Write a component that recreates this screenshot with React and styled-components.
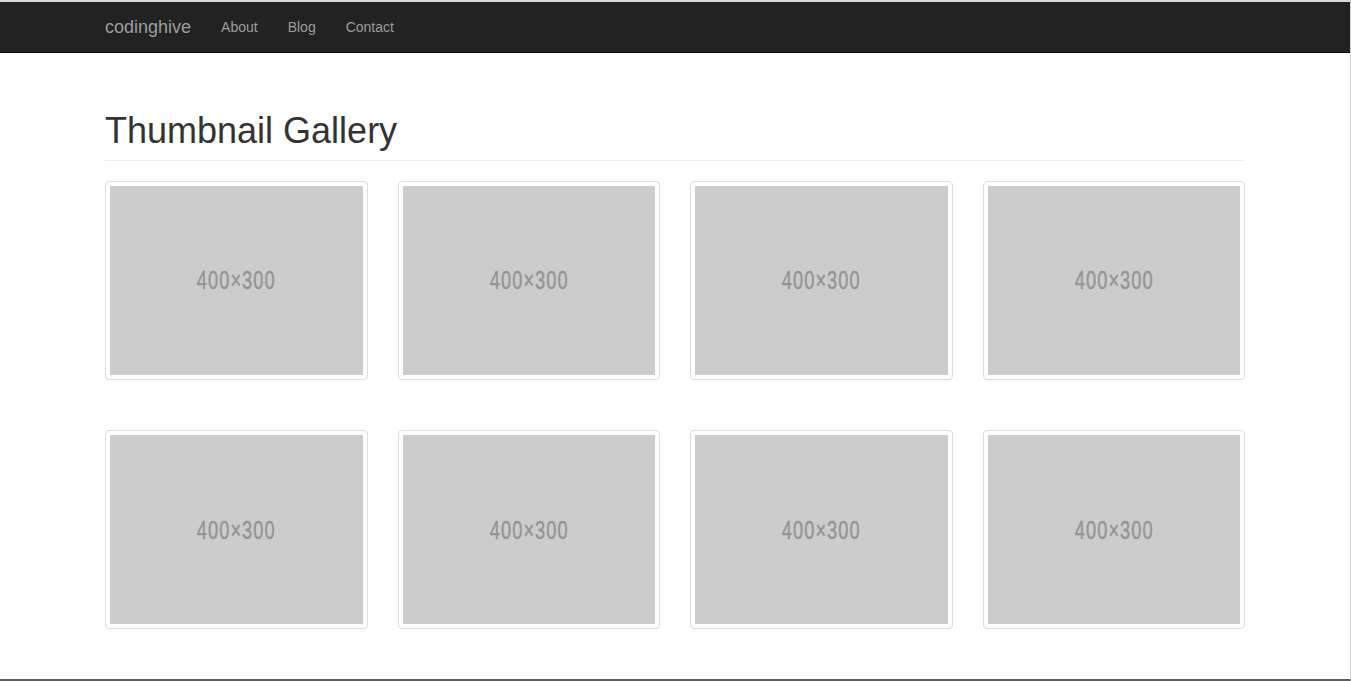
import React from "react";
import styled, { createGlobalStyle } from "styled-components";

const GlobalStyle = createGlobalStyle`
  html, body {
    margin: 0;
    padding: 0;
    background: #fff;
  }
  body {
    font-family: "Liberation Sans", Arial, Helvetica, sans-serif;
    font-size: 14px;
    line-height: 1.42857;
    color: #333;
  }
  * {
    box-sizing: border-box;
  }
  a {
    text-decoration: none;
  }
`;

const links = ["About", "Blog", "Contact"];
const thumbs = Array.from({ length: 8 }, (_, i) => i);

function App() {
  return (
    <Frame>
      <GlobalStyle />
      <Navbar>
        <NavInner>
          <Brand href="#">codinghive</Brand>
          <NavList>
            {links.map((l) => (
              <li key={l}>
                <NavLink href="#">{l}</NavLink>
              </li>
            ))}
          </NavList>
        </NavInner>
      </Navbar>

      <Container>
        <PageHeader>Thumbnail Gallery</PageHeader>
        <Gallery>
          {thumbs.map((i) => (
            <Thumbnail href="#" key={i}>
              <Placeholder>
                <PlaceholderText>400×300</PlaceholderText>
              </Placeholder>
            </Thumbnail>
          ))}
        </Gallery>
      </Container>
    </Frame>
  );
}

export default App;

const Frame = styled.div`
  height: 681px;
  overflow: hidden;
  border-top: 2px solid #d6d6d6;
  border-right: 1px solid #d2d2d2;
  border-bottom: 2px solid #5c6152;
  display: flex;
  flex-direction: column;
`;

const Navbar = styled.nav`
  background-color: #222;
  border-bottom: 1px solid #080808;
  min-height: 50px;
  flex-shrink: 0;
`;

const NavInner = styled.div`
  width: 1170px;
  margin: 0 auto;
  display: flex;
  align-items: center;
  height: 50px;
`;

const Brand = styled.a`
  font-size: 18px;
  line-height: 20px;
  padding: 15px;
  color: #9d9d9d;
`;

const NavList = styled.ul`
  display: flex;
  list-style: none;
  margin: 0;
  padding: 0;
`;

const NavLink = styled.a`
  display: block;
  padding: 15px;
  line-height: 20px;
  font-size: 14px;
  color: #9d9d9d;
`;

const Container = styled.div`
  width: 1170px;
  margin: 0 auto;
  padding: 58px 15px 0;
`;

const PageHeader = styled.h1`
  margin: 0 0 20px;
  padding-bottom: 9px;
  border-bottom: 1px solid #eee;
  font-size: 36px;
  font-weight: 500;
  line-height: 1.1;
  color: #333;
`;

const Gallery = styled.div`
  display: grid;
  grid-template-columns: repeat(4, 1fr);
  column-gap: 30px;
  row-gap: 50px;
`;

const Thumbnail = styled.a`
  display: block;
  padding: 4px;
  background: #fff;
  border: 1px solid #ddd;
  border-radius: 4px;
`;

const Placeholder = styled.div`
  aspect-ratio: 4 / 3;
  background: #ccc;
  display: flex;
  align-items: center;
  justify-content: center;
`;

const PlaceholderText = styled.span`
  display: inline-block;
  color: #949494;
  font-family: "Liberation Sans", Arial, sans-serif;
  font-size: 26px;
  line-height: 1;
  letter-spacing: 1.5px;
  -webkit-text-stroke: 0.4px #949494;
  transform: scaleX(0.7);
`;
